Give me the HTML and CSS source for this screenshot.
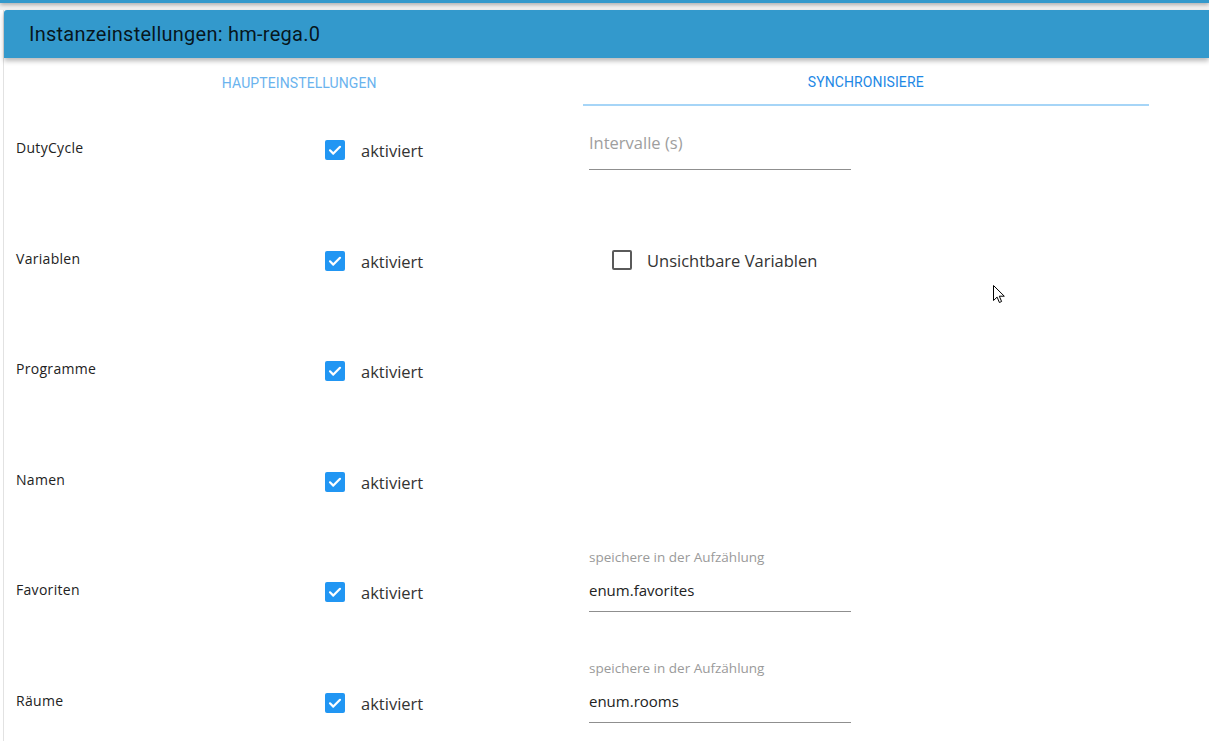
FILE: index.html
```html
<!DOCTYPE html>
<html lang="de">
<head>
<meta charset="utf-8">
<title>Instanzeinstellungen: hm-rega.0</title>
<link rel="stylesheet" href="styles.css">
</head>
<body>
<div class="topbar"></div>
<div class="gap"></div>
<div class="dialog">
  <header class="header">Instanzeinstellungen: hm-rega.0</header>
  <div class="card">
    <nav class="tabs">
      <div class="tab">Haupteinstellungen</div>
      <div class="tab active">Synchronisiere</div>
    </nav>
    <div class="rows">
      <div class="row">
        <div class="label">DutyCycle</div>
        <div class="check"><span class="box on"><svg viewBox="0 0 20 20"><path d="M5 10.3l3.3 3.3L15 6.8"/></svg></span><span class="ctext">aktiviert</span></div>
        <div class="right">
          <div class="field placeholder"><span class="ph">Intervalle (s)</span></div>
        </div>
      </div>
      <div class="row">
        <div class="label">Variablen</div>
        <div class="check"><span class="box on"><svg viewBox="0 0 20 20"><path d="M5 10.3l3.3 3.3L15 6.8"/></svg></span><span class="ctext">aktiviert</span></div>
        <div class="right">
          <div class="check inset"><span class="box off"></span><span class="ctext">Unsichtbare Variablen</span></div>
        </div>
      </div>
      <div class="row">
        <div class="label">Programme</div>
        <div class="check"><span class="box on"><svg viewBox="0 0 20 20"><path d="M5 10.3l3.3 3.3L15 6.8"/></svg></span><span class="ctext">aktiviert</span></div>
        <div class="right"></div>
      </div>
      <div class="row">
        <div class="label">Namen</div>
        <div class="check"><span class="box on"><svg viewBox="0 0 20 20"><path d="M5 10.3l3.3 3.3L15 6.8"/></svg></span><span class="ctext">aktiviert</span></div>
        <div class="right"></div>
      </div>
      <div class="row">
        <div class="label">Favoriten</div>
        <div class="check"><span class="box on"><svg viewBox="0 0 20 20"><path d="M5 10.3l3.3 3.3L15 6.8"/></svg></span><span class="ctext">aktiviert</span></div>
        <div class="right">
          <div class="field filled"><span class="helper">speichere in der Aufzählung</span><span class="value">enum.favorites</span></div>
        </div>
      </div>
      <div class="row">
        <div class="label">Räume</div>
        <div class="check"><span class="box on"><svg viewBox="0 0 20 20"><path d="M5 10.3l3.3 3.3L15 6.8"/></svg></span><span class="ctext">aktiviert</span></div>
        <div class="right">
          <div class="field filled"><span class="helper">speichere in der Aufzählung</span><span class="value">enum.rooms</span></div>
        </div>
      </div>
    </div>
  </div>
</div>
<svg class="cursor" viewBox="0 0 12 19" width="12" height="19"><path d="M0.5 0.5v15l3.6-3.4 2.3 5.4 2.2-1-2.3-5.3h5z" fill="#fff" stroke="#000" stroke-width="1"/></svg>
</body>
</html>
```
FILE: styles.css
```css
html, body {
  margin: 0;
  padding: 0;
  background: #ffffff;
  width: 1209px;
  height: 741px;
  overflow: hidden;
  position: relative;
}
body {
  font-family: "Open Sans", "Noto Sans", sans-serif;
  color: #333;
}
.topbar {
  height: 3px;
  background: #3399cc;
  box-shadow: 0 1px 4px rgba(0,0,0,0.45);
  position: relative;
  z-index: 2;
}
.gap {
  height: 7px;
  background: #f1f1f1;
}
.dialog {
  margin-left: 3px;
  border-left: 1px solid #e2e2e2;
}
.header {
  height: 48px;
  background: #3399cc;
  border-top-left-radius: 3px;
  box-shadow: 0 3px 5px rgba(0,0,0,0.28);
  font-family: Roboto, "Liberation Sans", sans-serif;
  font-size: 20px;
  letter-spacing: 0.25px;
  color: rgba(0,0,0,0.87);
  display: flex;
  align-items: center;
  padding-left: 25px;
  position: relative;
  z-index: 1;
}
.card {
  padding-left: 12px;
}
.tabs {
  display: flex;
  width: 1133px;
  height: 48px;
}
.tab {
  flex: 1;
  display: flex;
  align-items: center;
  justify-content: center;
  font-family: Roboto, "Liberation Sans", sans-serif;
  font-size: 14px;
  letter-spacing: 0.1px;
  text-transform: uppercase;
  color: #6ab3ee;
  box-sizing: border-box;
  padding-top: 1px;
}
.tab.active {
  color: #1e88e5;
  border-bottom: 2px solid #a6d5f7;
  padding-bottom: 0;
}
.rows {
  display: flex;
  flex-direction: column;
}
.row {
  display: grid;
  grid-template-columns: 309px 258px 1fr;
  height: 110.5px;
  align-items: start;
}
.label {
  padding-top: 34px;
  font-size: 14px;
  line-height: 16px;
  letter-spacing: 0.3px;
  color: #222;
}
.check {
  margin-top: 34px;
  display: flex;
  align-items: center;
  height: 20px;
}
.check.inset {
  margin-left: 23px;
  margin-top: 33px;
}
.box {
  width: 20px;
  height: 20px;
  box-sizing: border-box;
  border-radius: 2px;
  display: inline-flex;
  flex: none;
}
.box.on {
  background: #2196f3;
}
.box.on svg {
  width: 20px;
  height: 20px;
}
.box.on path {
  fill: none;
  stroke: #fff;
  stroke-width: 2.2;
  stroke-linecap: round;
  stroke-linejoin: round;
}
.box.off {
  border: 2px solid #5a5a5a;
}
.ctext {
  margin-left: 16px;
  font-size: 16.5px;
  line-height: 20px;
  color: #333;
  padding-top: 2px;
}
.check.inset .ctext {
  margin-left: 15px;
}
.right {
  padding-left: 6px;
}
.field {
  width: 262px;
  border-bottom: 1px solid #8f8f8f;
  box-sizing: border-box;
  display: flex;
  flex-direction: column;
}
.field.placeholder {
  margin-top: 26px;
  height: 38px;
}
.ph {
  font-size: 16.5px;
  line-height: 22px;
  color: #9e9e9e;
}
.field.filled {
  margin-top: 2px;
  height: 62px;
}
.helper {
  font-size: 13.5px;
  line-height: 16px;
  margin-top: -1px;
  color: #9a9a9a;
}
.value {
  margin-top: 15px;
  font-size: 15px;
  line-height: 20px;
  color: #222;
}
.cursor {
  position: absolute;
  left: 993px;
  top: 285px;
}
```
